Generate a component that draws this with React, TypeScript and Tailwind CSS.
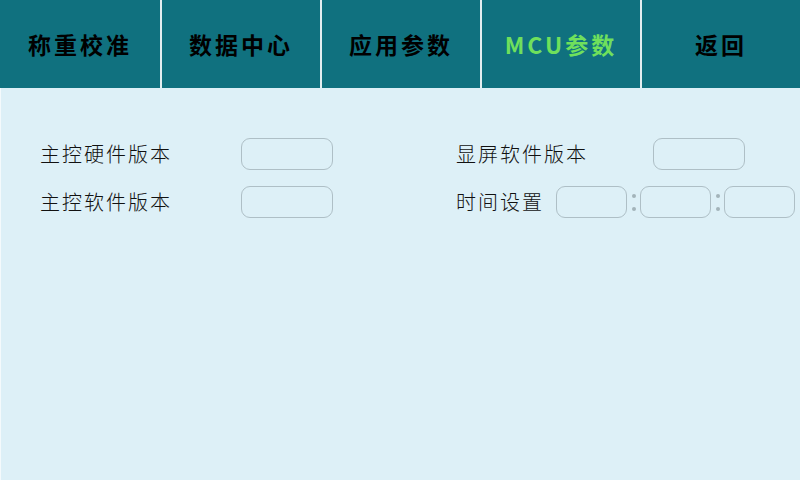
const tabs = [
  { label: "称重校准", active: false },
  { label: "数据中心", active: false },
  { label: "应用参数", active: false },
  { label: "MCU参数", active: true },
  { label: "返回", active: false },
];

const font = { fontFamily: '"Noto Sans CJK SC", "Noto Sans", sans-serif' };

function Box({ className = "w-[92px]" }: { className?: string }) {
  return (
    <div className={`${className} h-[32px] rounded-[9px] border border-[#aebfc6]`} />
  );
}

function Colon() {
  return (
    <div className="flex w-[13px] flex-col items-center justify-center gap-[9px]">
      <span className="h-[4px] w-[4px] rounded-full bg-[#a3b4ba]" />
      <span className="h-[4px] w-[4px] rounded-full bg-[#a3b4ba]" />
    </div>
  );
}

export default function App() {
  return (
    <div className="flex h-[480px] w-[800px] flex-col bg-[#ddf0f7]" style={font}>
      <div className="flex h-[88px] bg-[#10717f]">
        {tabs.map((t, i) => (
          <div
            key={t.label}
            className={`flex w-[160px] items-center justify-center text-[23px] font-bold tracking-[3px] ${
              i > 0 ? "border-l-2 border-[#e4eef0]" : ""
            } ${t.active ? "text-[#6fe05c]" : "text-black"}`}
          >
            {t.label}
          </div>
        ))}
      </div>
      <div className="flex flex-1 border-l border-[#f4fafc] pt-[50px] pl-[39px] text-[20px] font-light tracking-[2px] text-[#111]">
        <div className="flex w-[416px] flex-col gap-[16px]">
          <div className="flex h-[32px] items-center">
            <span className="w-[201px]">主控硬件版本</span>
            <Box />
          </div>
          <div className="flex h-[32px] items-center">
            <span className="w-[201px]">主控软件版本</span>
            <Box />
          </div>
        </div>
        <div className="flex flex-col gap-[16px]">
          <div className="flex h-[32px] items-center">
            <span className="w-[197px]">显屏软件版本</span>
            <Box />
          </div>
          <div className="flex h-[32px] items-center">
            <span className="w-[100px]">时间设置</span>
            <Box className="w-[71px]" />
            <Colon />
            <Box className="w-[71px]" />
            <Colon />
            <Box className="w-[71px]" />
          </div>
        </div>
      </div>
    </div>
  );
}
